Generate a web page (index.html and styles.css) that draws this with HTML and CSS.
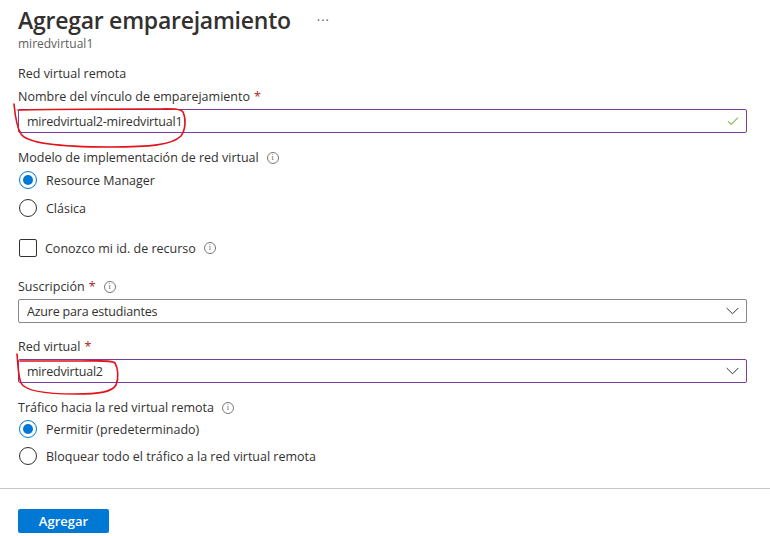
FILE: index.html
```html
<!DOCTYPE html>
<html lang="es">
<head>
<meta charset="utf-8">
<title>Agregar emparejamiento</title>
<link rel="stylesheet" href="styles.css">
</head>
<body>
<div class="page">
  <main class="content">
    <header class="header">
      <div class="title-row">
        <h1 class="title">Agregar emparejamiento</h1>
        <span class="more">···</span>
      </div>
      <div class="subtitle">miredvirtual1</div>
    </header>

    <div class="section-title">Red virtual remota</div>

    <div class="field f-name">
      <label class="label">Nombre del vínculo de emparejamiento <span class="req">*</span></label>
      <div class="input valid">
        <span class="value">miredvirtual2-miredvirtual1</span>
        <svg class="check" width="12" height="10" viewBox="0 0 12 10"><path d="M1 5.2 L4.2 8.4 L11 1.6" fill="none" stroke="#8cbd5a" stroke-width="1.2"/></svg>
      </div>
    </div>

    <div class="field f-model">
      <label class="label">Modelo de implementación de red virtual <span class="info">i</span></label>
      <div class="radios">
        <div class="radio-row"><span class="radio checked"></span><span>Resource Manager</span></div>
        <div class="radio-row"><span class="radio"></span><span>Clásica</span></div>
      </div>
    </div>

    <div class="check-row"><span class="checkbox"></span><span>Conozco mi id. de recurso</span><span class="info">i</span></div>

    <div class="field f-sub">
      <label class="label">Suscripción <span class="req">*</span> <span class="info">i</span></label>
      <div class="input select">
        <span class="value">Azure para estudiantes</span>
        <svg class="chev" width="13" height="8" viewBox="0 0 13 8"><path d="M0.7 1 L6.5 6.8 L12.3 1" fill="none" stroke="#323130" stroke-width="1"/></svg>
      </div>
    </div>

    <div class="field f-vnet">
      <label class="label">Red virtual <span class="req">*</span></label>
      <div class="input select valid">
        <span class="value">miredvirtual2</span>
        <svg class="chev" width="13" height="8" viewBox="0 0 13 8"><path d="M0.7 1 L6.5 6.8 L12.3 1" fill="none" stroke="#323130" stroke-width="1"/></svg>
      </div>
    </div>

    <div class="field f-traffic">
      <label class="label">Tráfico hacia la red virtual remota <span class="info">i</span></label>
      <div class="radios tight">
        <div class="radio-row"><span class="radio checked"></span><span>Permitir (predeterminado)</span></div>
        <div class="radio-row"><span class="radio"></span><span>Bloquear todo el tráfico a la red virtual remota</span></div>
      </div>
    </div>
  </main>

  <footer class="footer">
    <button class="btn-primary">Agregar</button>
  </footer>

  <svg class="scribble s1" width="200" height="60" viewBox="0 0 200 60">
    <path d="M14 8 C15 18 16 30 21 38 C27 47 60 51 110 51 C150 51 172 49 181 40 C186 33 186 22 183 16 C180 12 172 13 150 13 C100 13 50 13 18 14" fill="none" stroke="#e2131b" stroke-width="1.6" stroke-linecap="round"/>
  </svg>
  <svg class="scribble s2" width="130" height="50" viewBox="0 0 130 50">
    <path d="M17 4 C18 14 18 26 21 33 C25 41 45 44 75 44 C100 44 112 42 116 35 C119 28 118 18 115 13 C111 10 100 11 80 11 C55 11 35 11 20 11" fill="none" stroke="#e2131b" stroke-width="1.6" stroke-linecap="round"/>
  </svg>
</div>
</body>
</html>
```

FILE: styles.css
```css
* { box-sizing: border-box; }
html, body { margin: 0; padding: 0; background: #ffffff; }
body {
  font-family: "Open Sans", "Noto Sans", "Liberation Sans", sans-serif;
  font-size: 12.5px;
  color: #323130;
  width: 770px;
  height: 536px;
  overflow: hidden;
}
.page { position: relative; width: 770px; height: 536px; }
.content { padding: 4px 23px 0 18px; }

.title-row { display: flex; align-items: center; height: 32px; }
.title { margin: 0; font-size: 23px; font-weight: 600; line-height: 32px; color: #323130; letter-spacing: -0.25px; }
.more { margin-left: 26px; font-size: 13px; color: #605e5c; letter-spacing: 1px; line-height: 32px; }
.subtitle { font-size: 12px; line-height: 16px; color: #605e5c; }

.section-title { margin-top: 13px; line-height: 18px; }

.field { display: flex; flex-direction: column; }
.label { display: flex; align-items: center; line-height: 18px; }
.req { color: #a4262c; margin-left: 4px; }
.info {
  display: inline-flex; align-items: center; justify-content: center;
  width: 12px; height: 12px; border: 1px solid #7a7874; border-radius: 50%;
  font-size: 8px; line-height: 1; color: #605e5c; margin-left: 8px; font-family: "Liberation Serif", serif;
}

.f-name { margin-top: 5px; }
.input {
  margin-top: 3px; height: 24px; border: 1px solid #8a8886; border-radius: 2px;
  display: flex; align-items: center; justify-content: space-between; padding: 0 7px 0 8px;
}
.value { letter-spacing: -0.2px; }
.input.valid { border-color: #7a3f9a; }

.f-model { margin-top: 16px; }
.radios { display: flex; flex-direction: column; gap: 8px; margin-top: 3px; }
.radios.tight { gap: 7px; margin-top: 2px; }
.radio-row { display: flex; align-items: center; height: 20px; gap: 9px; }
.radio {
  width: 18px; height: 18px; border: 1px solid #323130; border-radius: 50%;
  margin-left: 1px; display: inline-flex; align-items: center; justify-content: center;
}
.radio.checked { border-color: #0078d4; }
.radio.checked::after { content: ""; width: 10px; height: 10px; border-radius: 50%; background: #0078d4; }

.check-row { display: flex; align-items: center; height: 20px; margin-top: 20px; }
.checkbox { width: 18px; height: 18px; border: 1px solid #323130; border-radius: 2px; margin-left: 1px; margin-right: 8px; }

.f-sub { margin-top: 20px; }
.f-vnet { margin-top: 15px; }
.f-traffic { margin-top: 16px; }

.footer { margin-top: 22px; border-top: 1px solid #c8c6c4; padding: 20px 18px 0; }
.btn-primary {
  width: 91px; height: 24px; border: none; border-radius: 2px; background: #0078d4; color: #ffffff;
  font-family: inherit; font-size: 13px; font-weight: 600; padding: 0; cursor: pointer;
}

.scribble { position: absolute; left: 0; pointer-events: none; }
.s1 { top: 96px; }
.s2 { top: 350px; }
```
